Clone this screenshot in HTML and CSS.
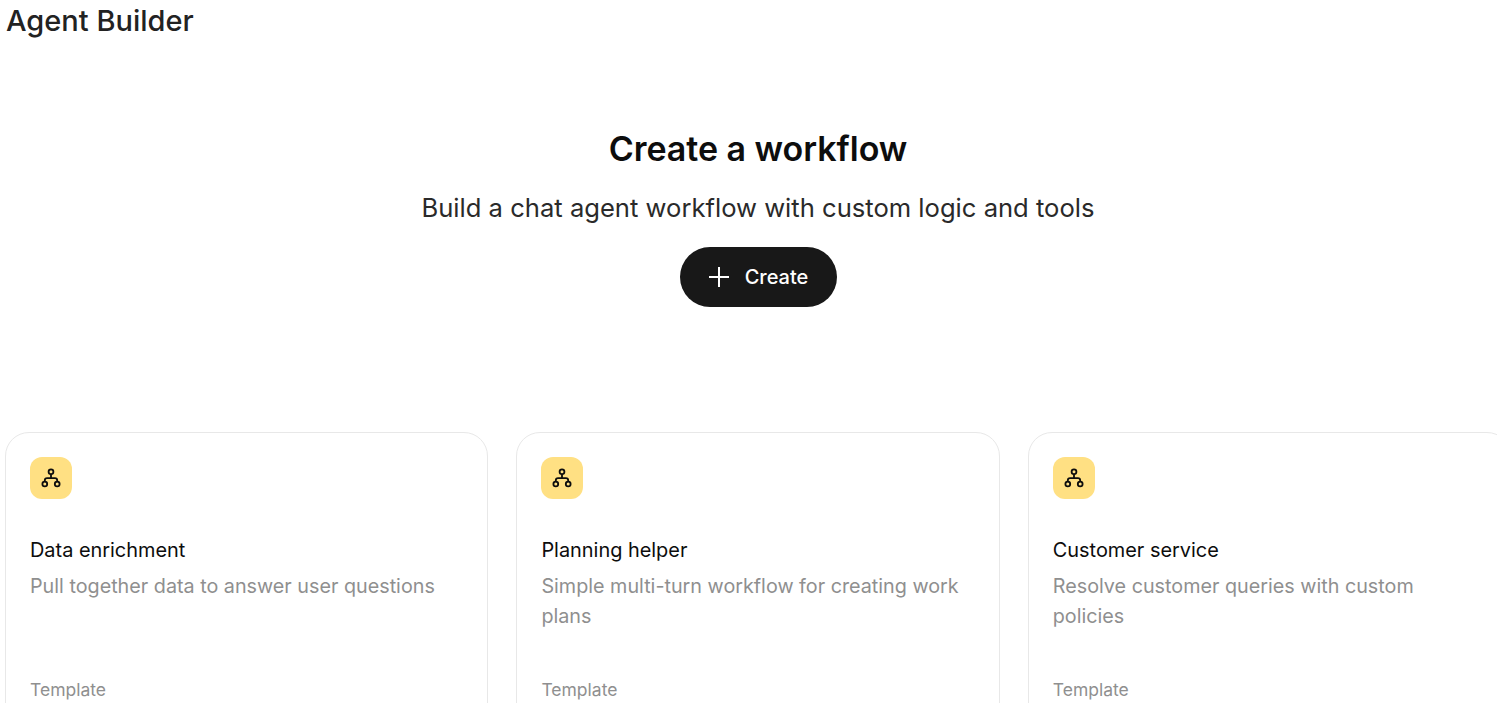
FILE: index.html
```html
<!DOCTYPE html>
<html lang="en">
<head>
<meta charset="utf-8">
<title>Agent Builder</title>
<link rel="stylesheet" href="styles.css">
</head>
<body>
<header class="topbar"><h1 class="page-title">Agent Builder</h1></header>
<main class="main">
  <section class="hero">
    <h2 class="hero-title">Create a workflow</h2>
    <p class="hero-sub">Build a chat agent workflow with custom logic and tools</p>
    <button class="create-btn" type="button">
      <svg class="plus" viewBox="0 0 22 22" width="22" height="22" aria-hidden="true"><path d="M11 1v20M1 11h20"/></svg>
      <span>Create</span>
    </button>
  </section>
  <section class="cards">
    <article class="card">
      <div class="card-icon"><svg viewBox="0 0 20 20" width="20" height="20" aria-hidden="true"><circle cx="10" cy="3.8" r="2.4"/><circle cx="3.8" cy="16" r="2.4"/><circle cx="16.2" cy="16" r="2.4"/><path d="M10 6.2v3.9M3.8 13.6v-1.2a2.3 2.3 0 0 1 2.3-2.3h7.8a2.3 2.3 0 0 1 2.3 2.3v1.2"/></svg></div>
      <h3 class="card-title">Data enrichment</h3>
      <p class="card-desc">Pull together data to answer user questions</p>
      <div class="card-tag">Template</div>
    </article>
    <article class="card">
      <div class="card-icon"><svg viewBox="0 0 20 20" width="20" height="20" aria-hidden="true"><circle cx="10" cy="3.8" r="2.4"/><circle cx="3.8" cy="16" r="2.4"/><circle cx="16.2" cy="16" r="2.4"/><path d="M10 6.2v3.9M3.8 13.6v-1.2a2.3 2.3 0 0 1 2.3-2.3h7.8a2.3 2.3 0 0 1 2.3 2.3v1.2"/></svg></div>
      <h3 class="card-title">Planning helper</h3>
      <p class="card-desc">Simple multi-turn workflow for creating work plans</p>
      <div class="card-tag">Template</div>
    </article>
    <article class="card">
      <div class="card-icon"><svg viewBox="0 0 20 20" width="20" height="20" aria-hidden="true"><circle cx="10" cy="3.8" r="2.4"/><circle cx="3.8" cy="16" r="2.4"/><circle cx="16.2" cy="16" r="2.4"/><path d="M10 6.2v3.9M3.8 13.6v-1.2a2.3 2.3 0 0 1 2.3-2.3h7.8a2.3 2.3 0 0 1 2.3 2.3v1.2"/></svg></div>
      <h3 class="card-title">Customer service</h3>
      <p class="card-desc">Resolve customer queries with custom policies</p>
      <div class="card-tag">Template</div>
    </article>
  </section>
</main>
</body>
</html>
```
FILE: styles.css
```css
* { box-sizing: border-box; }
html, body { margin: 0; height: 100%; overflow: hidden; background: #fff; }
body { font-family: Inter, "Liberation Sans", sans-serif; color: #0d0d0d; }
.topbar { height: 42px; padding-left: 6px; display: flex; align-items: center; }
.page-title { margin: 0; font-size: 29px; font-weight: 500; line-height: 42px; color: #222; }
.main { display: flex; flex-direction: column; width: 1516px; height: 661px; overflow: hidden; }
.hero { display: flex; flex-direction: column; align-items: center; padding-top: 85px; height: 390px; flex: none; }
.hero-title { margin: 0; font-size: 34px; font-weight: 600; line-height: 44px; color: #0d0d0d; letter-spacing: -0.03px; }
.hero-sub { margin: 21px 0 0; font-size: 25.6px; font-weight: 400; line-height: 32px; color: #2a2a2a; }
.create-btn { margin-top: 23px; height: 60px; width: 157px; flex: none; border: 0; border-radius: 30px; background: #181818; color: #fff; font: 500 20px/1 Inter, "Liberation Sans", sans-serif; display: flex; align-items: center; justify-content: center; gap: 15px; padding: 0; }
.plus { fill: none; stroke: #fff; stroke-width: 2; }
.cards { display: flex; gap: 28.1px; padding-left: 5px; flex: none; }
.card { flex: 0 0 483.3px; height: 320px; border: 1px solid #e8e8e8; border-radius: 24px; padding: 24px; }
.card-icon { width: 42px; height: 42px; border-radius: 12px; background: #ffe083; display: flex; align-items: center; justify-content: center; }
.card-icon svg { fill: none; stroke: #0d0d0d; stroke-width: 1.8; }
.card-title { margin: 36px 0 0; font-size: 19.9px; font-weight: 420; line-height: 30px; color: #0d0d0d; }
.card-desc { margin: 6px 0 0; height: 60px; font-size: 19.75px; line-height: 30px; color: #8f8f8f; }
.card-tag { margin-top: 45px; font-size: 17.5px; line-height: 28px; color: #8f8f8f; }
```
